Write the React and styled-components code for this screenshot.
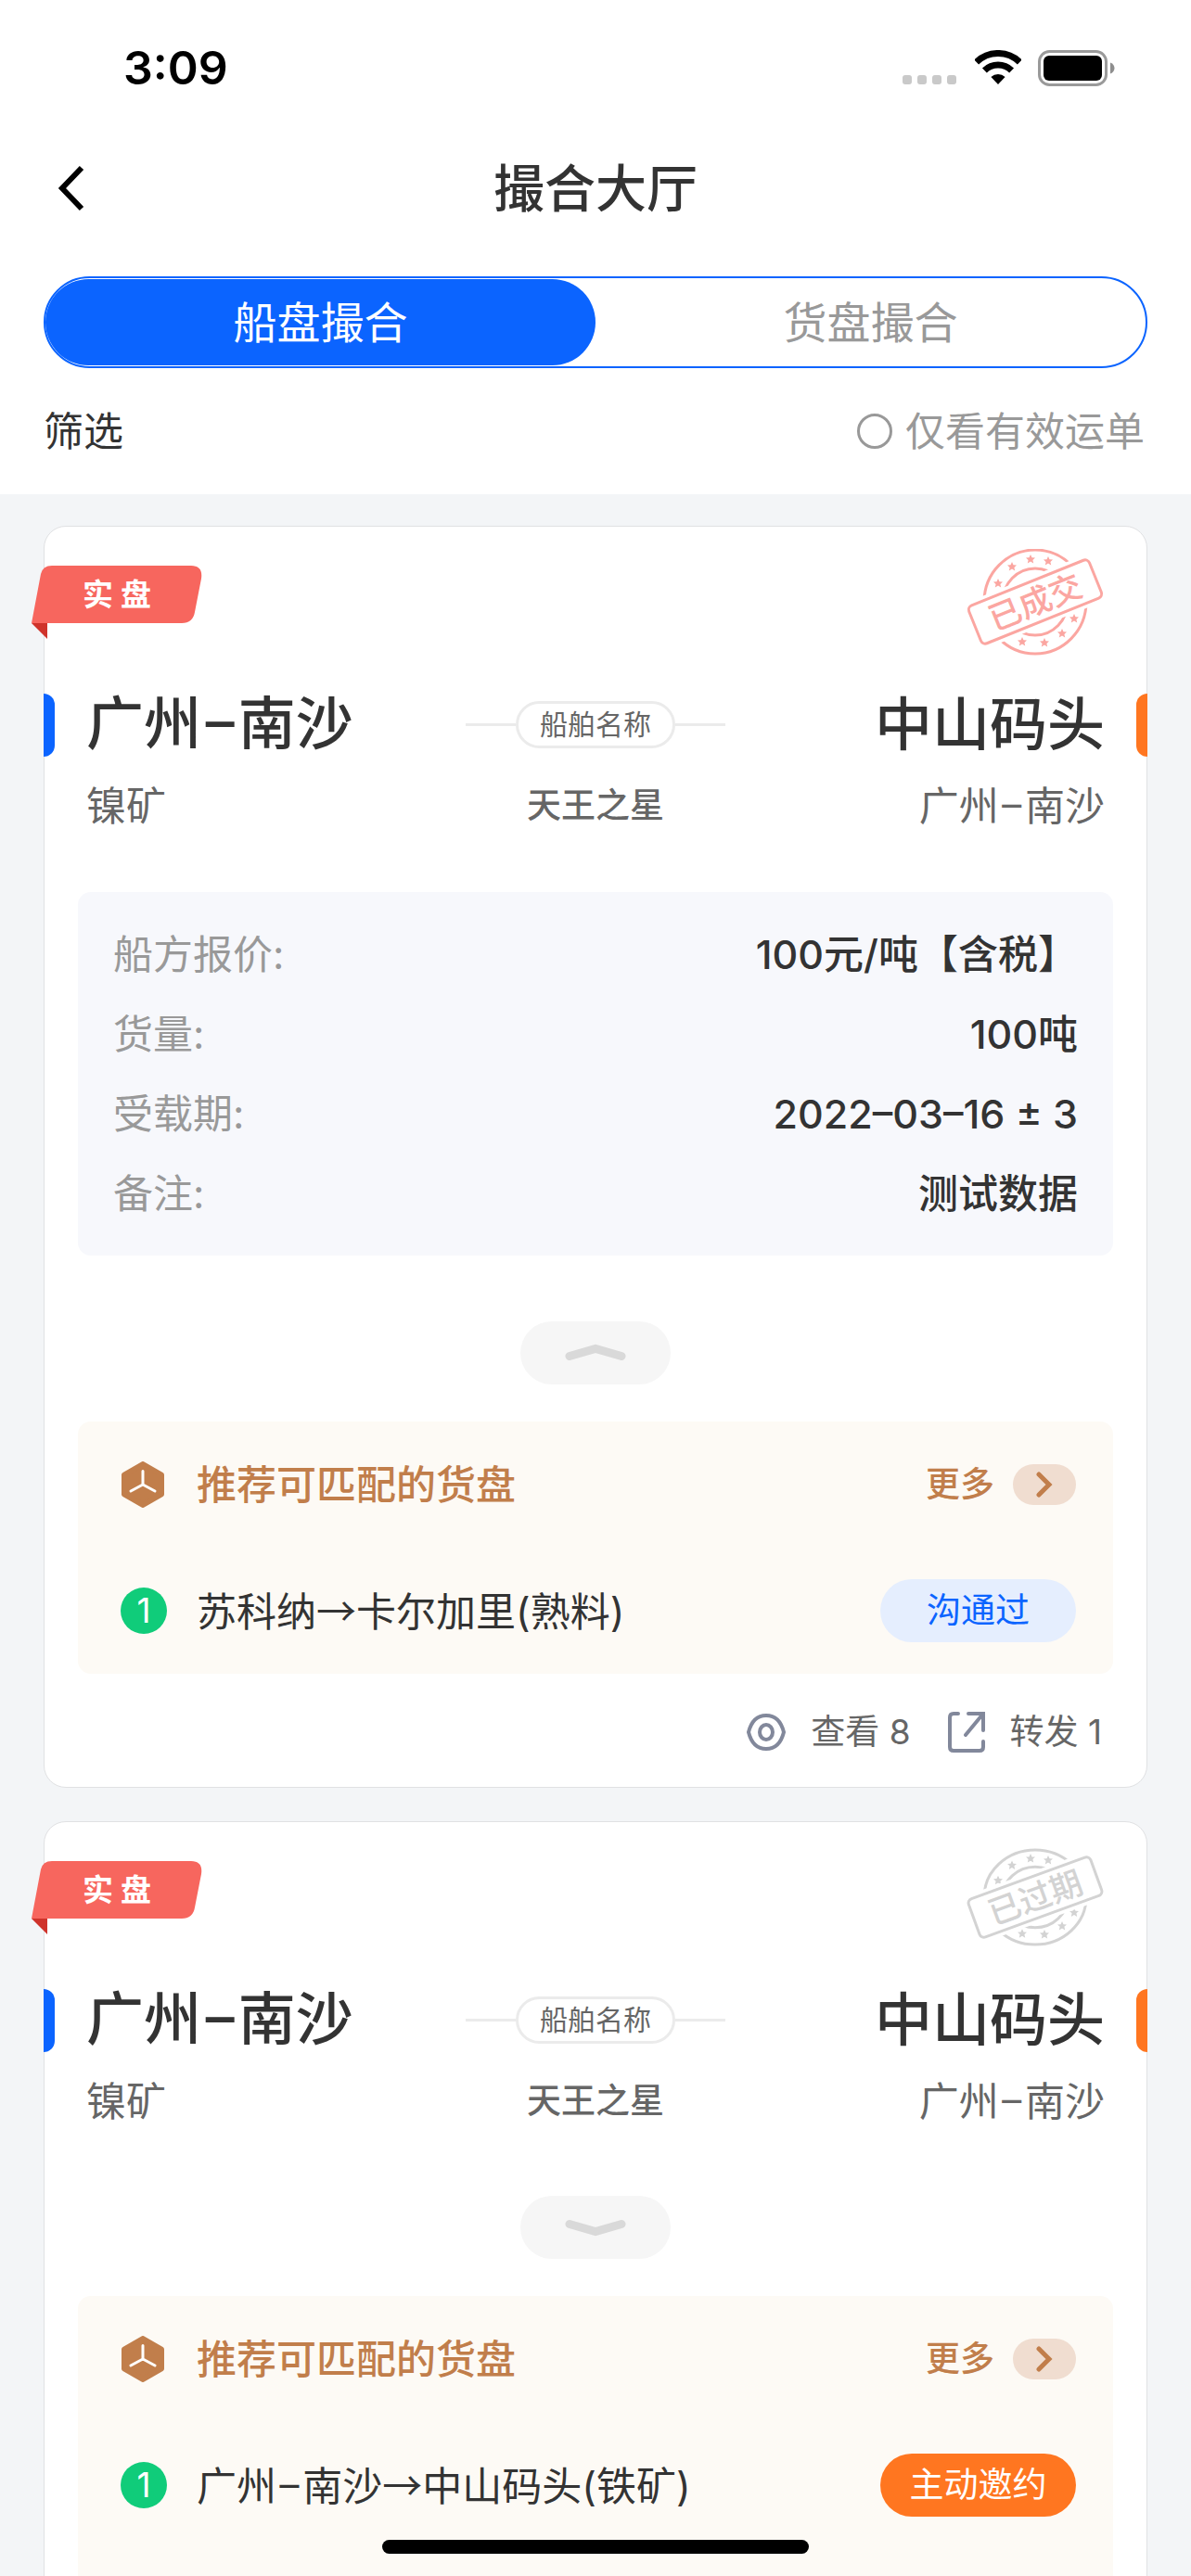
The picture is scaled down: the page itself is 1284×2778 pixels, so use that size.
import React, { useState } from 'react'
import styled, { createGlobalStyle } from 'styled-components'

const GlobalStyle = createGlobalStyle`
  * {
    box-sizing: border-box;
  }
  body {
    margin: 0;
    background: #f3f5f7;
    color: #333;
    font-family: Inter, 'Noto Sans CJK SC', sans-serif;
    font-size: 43px;
    line-height: 1.4;
  }
  button {
    margin: 0;
    padding: 0;
    border: 0;
    background: none;
    color: inherit;
    font: inherit;
    cursor: pointer;
  }
  svg {
    display: block;
    flex: none;
  }
`

// Shell

const Screen = styled.div`
  display: flex;
  flex-direction: column;
  height: 100vh;
  overflow: hidden;
`

const Top = styled.header`
  flex: none;
  padding: 0 47px;
  background: #fff;
`

const StatusBar = styled.div`
  display: flex;
  align-items: center;
  justify-content: space-between;
  height: 146px;
  padding: 0 35px 0 86px;
  color: #000;
`

const Clock = styled.time`
  font-size: 50px;
  font-weight: 600;
`

const StatusIcons = styled.div`
  display: flex;
  align-items: center;
  gap: 18px;
`

const Nav = styled.nav`
  display: grid;
  grid-template-columns: 60px 1fr 60px;
  align-items: center;
  height: 114px;
`

const BackButton = styled.button`
  padding-left: 14px;
`

const PageTitle = styled.h1`
  margin: 0;
  font-size: 55px;
  font-weight: 500;
  line-height: 80px;
  text-align: center;
`

const Tabs = styled.div`
  display: flex;
  height: 99px;
  margin-top: 38px;
  padding: 1px 0;
  border: 2px solid #0b64ff;
  border-radius: 50px;
`

const Tab = styled.button`
  flex: 1;
  border-radius: 48px;
  background: ${({ $active }) => ($active ? '#0b64ff' : 'transparent')};
  color: ${({ $active }) => ($active ? '#fff' : '#999')};
  font-size: 47px;
`

const FilterBar = styled.div`
  display: flex;
  align-items: center;
  justify-content: space-between;
  height: 136px;
`

const OnlyValid = styled.label`
  display: flex;
  align-items: center;
  gap: 14px;
  padding-right: 3px;
  color: #999;
`

const RoundCheck = styled.input`
  appearance: none;
  width: 38px;
  height: 38px;
  margin: 0;
  border: 3px solid #999;
  border-radius: 50%;
  &:checked {
    background: #0b64ff;
  }
`

const List = styled.main`
  flex: 1;
  display: flex;
  flex-direction: column;
  gap: 36px;
  padding: 34px 47px;
  overflow-y: auto;
  scrollbar-width: none;
`

const HomeIndicator = styled.div`
  position: fixed;
  bottom: 24px;
  left: 50%;
  width: 460px;
  height: 15px;
  margin-left: -230px;
  border-radius: 8px;
  background: #000;
`

// Card

const Card = styled.article`
  flex: none;
  border: 1px solid #e0e1e3;
  border-radius: 24px;
  background: #fff;
`

const CardHead = styled.div`
  display: flex;
  align-items: flex-start;
  justify-content: space-between;
  padding: 24px 45px 40px 0;
`

const Ribbon = styled.div`
  position: relative;
  width: 184px;
  height: 62px;
  margin: 18px 0 0 -14px;
  color: #fff;
  font-size: 33px;
  font-weight: 700;
  line-height: 62px;
  text-align: center;
  svg {
    position: absolute;
    top: 0;
    left: 0;
  }
  span {
    position: relative;
  }
`

const Route = styled.div`
  display: grid;
  grid-template-columns: 1fr 280px 1fr;
  align-items: center;
  height: 68px;
  margin: 0 -1px;
`

const Port = styled.h2`
  display: flex;
  align-items: center;
  flex-direction: ${({ $end }) => ($end ? 'row-reverse' : 'row')};
  gap: 34px;
  margin: 0;
  font-size: 62px;
  font-weight: 500;
  line-height: 68px;
  &::before {
    content: '';
    width: 12px;
    height: 68px;
    border-radius: ${({ $end }) => ($end ? '12px 0 0 12px' : '0 12px 12px 0')};
    background: ${({ $end }) => ($end ? '#ff7620' : '#0b64ff')};
  }
`

const Dash = styled.span`
  font-family: Roboto, sans-serif;
`

const ShipLabel = styled.div`
  display: flex;
  align-items: center;
  &::before,
  &::after {
    content: '';
    flex: 1;
    height: 3px;
    background: #ebebeb;
  }
  span {
    height: 51px;
    padding: 0 23px;
    border: 3px solid #ebebeb;
    border-radius: 26px;
    color: #666;
    font-size: 30px;
    line-height: 44px;
  }
`

const RouteSub = styled.div`
  display: grid;
  grid-template-columns: 1fr auto 1fr;
  margin: 24px 45px 0;
  color: #666;
  line-height: 60px;
  strong {
    font-size: 37px;
    font-weight: 500;
  }
`

const SubEnd = styled.span`
  text-align: right;
`

const Info = styled.dl`
  margin: 62px 36px 0;
  padding: 24px 38px;
  border-radius: 14px;
  background: #f7f8fc;
`

const InfoRow = styled.div`
  display: flex;
  justify-content: space-between;
  line-height: 86px;
  dt {
    color: #999;
  }
  dd {
    margin: 0;
    font-weight: 500;
  }
`

const Toggle = styled.button`
  display: flex;
  align-items: center;
  justify-content: center;
  width: 162px;
  height: 68px;
  margin: 71px auto 40px;
  border-radius: 34px;
  background: #f6f6f6;
`

const Match = styled.section`
  margin: 0 36px;
  padding-bottom: ${({ $roomy }) => ($roomy ? '68px' : '0')};
  border-radius: 14px;
  background: #fdfaf5;
`

const MatchRow = styled.div`
  display: flex;
  align-items: center;
  height: 136px;
  padding: 0 40px 0 46px;
`

const MatchTitle = styled.h3`
  flex: 1;
  margin: 0 0 0 34px;
  color: #c17e4b;
  font-size: 43px;
  font-weight: 500;
`

const More = styled.a`
  display: flex;
  align-items: center;
  gap: 20px;
  color: #c17e4b;
  font-size: 37px;
  font-weight: 500;
  text-decoration: none;
`

const MorePill = styled.span`
  display: flex;
  align-items: center;
  justify-content: center;
  width: 68px;
  height: 44px;
  border-radius: 22px;
  background: #f0ddd0;
`

const Index = styled.span`
  width: 50px;
  height: 50px;
  border-radius: 50%;
  background: #10cc7a;
  color: #fff;
  font-size: 37px;
  line-height: 50px;
  text-align: center;
`

const MatchRoute = styled.span`
  flex: 1;
  margin-left: 32px;
  i {
    font-family: 'Noto Sans CJK SC', sans-serif;
    font-style: normal;
  }
`

const Action = styled.button`
  width: 211px;
  height: 68px;
  border-radius: 34px;
  background: ${({ $primary }) => ($primary ? '#ff7620' : '#e5eefe')};
  color: ${({ $primary }) => ($primary ? '#fff' : '#0b64ff')};
  font-size: 37px;
`

const Stats = styled.footer`
  display: flex;
  align-items: center;
  justify-content: flex-end;
  gap: 40px;
  height: 122px;
  padding: 4px 48px 0 0;
  color: #666;
  font-size: 37px;
`

const Stat = styled.span`
  display: flex;
  align-items: center;
  gap: 27px;
`

// Drawings

const Wifi = () => (
  <svg width="50" height="38" viewBox="0 0 50 38">
    <g fill="none" stroke="#000" strokeWidth="7">
      <path d="M1.700 12.900A33.500 33.500 0 0 1 48.300 12.900" />
      <path d="M10.400 21.900A21 21 0 0 1 39.600 21.900" />
    </g>
    <path d="M25 37 17.400 29.100A11 11 0 0 1 32.600 29.100z" />
  </svg>
)

const Battery = () => (
  <svg width="83" height="39" viewBox="0 0 83 39">
    <rect x="1.500" y="1.500" width="72" height="36" rx="11" fill="none" stroke="#9a9a9a" strokeWidth="3" />
    <rect x="6" y="6" width="63" height="27" rx="6" />
    <path d="M78 13.500c3 1 4.500 3.500 4.500 6s-1.500 5-4.500 6z" fill="#8e8e8e" />
  </svg>
)

const Star = ({ x, y }) => (
  <path
    transform={`translate(${x} ${y})`}
    d="M0-5 1.500-1.700 5-1.500 2.400.900 3.200 4.500 0 2.600-3.200 4.500-2.400.900-5-1.500-1.500-1.700z"
    fill="currentColor"
  />
)

const StampSvg = styled.svg`
  color: ${({ $color }) => $color};
  text {
    fill: currentColor;
    font-family: 'Noto Sans CJK SC', sans-serif;
    font-size: 35px;
    font-weight: 500;
  }
`

const Stamp = ({ text, color, ry, tilt }) => {
  const k = ry / 56
  const stars = [
    [-40, -20], [-25, -38], [-5, -46], [14, -44],
    [-14, 43], [10, 44], [29, 34], [42, 18],
  ]
  return (
    <StampSvg $color={color} width="149" height="115" viewBox="-74 -57 149 115" role="img" aria-label={text}>
      <ellipse rx="55" ry={ry} fill="none" stroke="currentColor" strokeWidth="3" />
      <ellipse rx="35" ry={36 * k} fill="none" stroke="currentColor" strokeWidth="3" />
      {stars.map(([x, y]) => (
        <Star key={x} x={x} y={y * k} />
      ))}
      <g transform={`rotate(${tilt})`}>
        <rect x="-76" y="-27" width="152" height="54" fill="#fff" />
        <rect x="-70" y="-22" width="140" height="44" rx="5" fill="none" stroke="currentColor" strokeWidth="3" />
        <text x="0" y="13" textAnchor="middle">{text}</text>
      </g>
    </StampSvg>
  )
}

const RibbonShape = () => (
  <svg width="184" height="80" viewBox="0 0 184 80">
    <path d="M0 62h17v17z" fill="#cf332b" />
    <path d="M0 62 10 9Q12 0 22 0H172Q185 0 183 14L176 50Q174 62 162 62z" fill="#f7665e" />
  </svg>
)

const Arc = ({ up }) => (
  <svg width="66" height="20" viewBox="0 0 66 20">
    <path
      d={up ? 'M5 13.500 33 5.500l28 8' : 'M5 6.500 33 14.500l28-8'}
      fill="none"
      stroke="#d9d9d9"
      strokeWidth="9"
      strokeLinecap="round"
    />
  </svg>
)

const CubeIcon = () => (
  <svg width="48" height="50" viewBox="0 0 48 50">
    <path
      d="M24 3 44 14.500v21L24 47 4 35.500v-21z"
      fill="#c17e4b"
      stroke="#c17e4b"
      strokeWidth="6"
      strokeLinejoin="round"
    />
    <path d="M24 10.500V25M24 25 11 32M24 25l13 7" fill="none" stroke="#fff" strokeWidth="3" strokeLinecap="round" />
  </svg>
)

const EyeIcon = () => (
  <svg width="42" height="42" viewBox="0 0 42 42" fill="none" stroke="#82889b" strokeWidth="4">
    <path d="M2 21C5 9 12 3 21 3s16 6 19 18c-3 12-10 18-19 18S5 33 2 21z" />
    <ellipse cx="21" cy="21" rx="7" ry="8" />
  </svg>
)

const ShareIcon = () => (
  <svg width="40" height="44" viewBox="0 0 40 44" fill="none" stroke="#82889b" strokeWidth="4" strokeLinecap="round">
    <path d="M11 2H6Q2 2 2 6v32q0 4 4 4h28q4 0 4-4v-6M22 2h16v18M38 2 19 25" />
  </svg>
)

// Parts

const rows = [
  ['船方报价:', '100元/吨【含税】'],
  ['货量:', '100吨'],
  ['受载期:', '2022–03–16 ± 3'],
  ['备注:', '测试数据'],
]

const Nansha = () => (
  <span>
    广州<Dash>–</Dash>南沙
  </span>
)

const ShipCard = ({ stamp, defaultOpen, from, to, cargo, action, primary }) => {
  const [open, setOpen] = useState(defaultOpen)
  return (
    <Card>
      <CardHead>
        <Ribbon>
          <RibbonShape />
          <span>实 盘</span>
        </Ribbon>
        <Stamp {...stamp} />
      </CardHead>
      <Route>
        <Port>
          <Nansha />
        </Port>
        <ShipLabel>
          <span>船舶名称</span>
        </ShipLabel>
        <Port $end>中山码头</Port>
      </Route>
      <RouteSub>
        <span>镍矿</span>
        <strong>天王之星</strong>
        <SubEnd>
          <Nansha />
        </SubEnd>
      </RouteSub>
      {open && (
        <Info>
          {rows.map(([label, value]) => (
            <InfoRow key={label}>
              <dt>{label}</dt>
              <dd>{value}</dd>
            </InfoRow>
          ))}
        </Info>
      )}
      <Toggle aria-label={open ? '收起' : '展开'} aria-expanded={open} onClick={() => setOpen(!open)}>
        <Arc up={open} />
      </Toggle>
      <Match $roomy={primary}>
        <MatchRow>
          <CubeIcon />
          <MatchTitle>推荐可匹配的货盘</MatchTitle>
          <More href="#more">
            更多
            <MorePill>
              <svg width="18" height="28" viewBox="0 0 18 28">
                <path d="M3 3l11 11L3 25" fill="none" stroke="#c17e4b" strokeWidth="5" strokeLinecap="round" />
              </svg>
            </MorePill>
          </More>
        </MatchRow>
        <MatchRow>
          <Index>1</Index>
          <MatchRoute>
            {from}
            <i>→</i>
            {to}({cargo})
          </MatchRoute>
          <Action $primary={primary}>{action}</Action>
        </MatchRow>
      </Match>
      <Stats>
        <Stat>
          <EyeIcon />
          查看 8
        </Stat>
        <Stat>
          <ShareIcon />
          转发 1
        </Stat>
      </Stats>
    </Card>
  )
}

const App = () => {
  const [tab, setTab] = useState(0)
  return (
    <Screen>
      <GlobalStyle />
      <Top>
        <StatusBar>
          <Clock>3:09</Clock>
          <StatusIcons>
            <svg width="60" height="36" viewBox="0 0 60 36" fill="#c9c9c9">
              {[0, 16, 32, 48].map(x => (
                <rect key={x} x={x} y="26" width="10" height="10" rx="3" />
              ))}
            </svg>
            <Wifi />
            <Battery />
          </StatusIcons>
        </StatusBar>
        <Nav>
          <BackButton aria-label="返回">
            <svg width="32" height="50" viewBox="0 0 32 50">
              <path d="M27 3 6 25l21 22" fill="none" stroke="#000" strokeWidth="6" />
            </svg>
          </BackButton>
          <PageTitle>撮合大厅</PageTitle>
        </Nav>
        <Tabs role="tablist">
          {['船盘撮合', '货盘撮合'].map((name, i) => (
            <Tab key={name} role="tab" aria-selected={tab === i} $active={tab === i} onClick={() => setTab(i)}>
              {name}
            </Tab>
          ))}
        </Tabs>
        <FilterBar>
          <button>筛选</button>
          <OnlyValid>
            <RoundCheck type="checkbox" />
            仅看有效运单
          </OnlyValid>
        </FilterBar>
      </Top>
      <List>
        <ShipCard
          defaultOpen
          stamp={{ text: '已成交', color: '#fba6a1', ry: 56, tilt: -22 }}
          from="苏科纳"
          to="卡尔加里"
          cargo="熟料"
          action="沟通过"
        />
        <ShipCard
          defaultOpen={false}
          stamp={{ text: '已过期', color: '#d3d3d3', ry: 51, tilt: -20 }}
          from={<Nansha />}
          to="中山码头"
          cargo="铁矿"
          action="主动邀约"
          primary
        />
      </List>
      <HomeIndicator />
    </Screen>
  )
}

export default App
